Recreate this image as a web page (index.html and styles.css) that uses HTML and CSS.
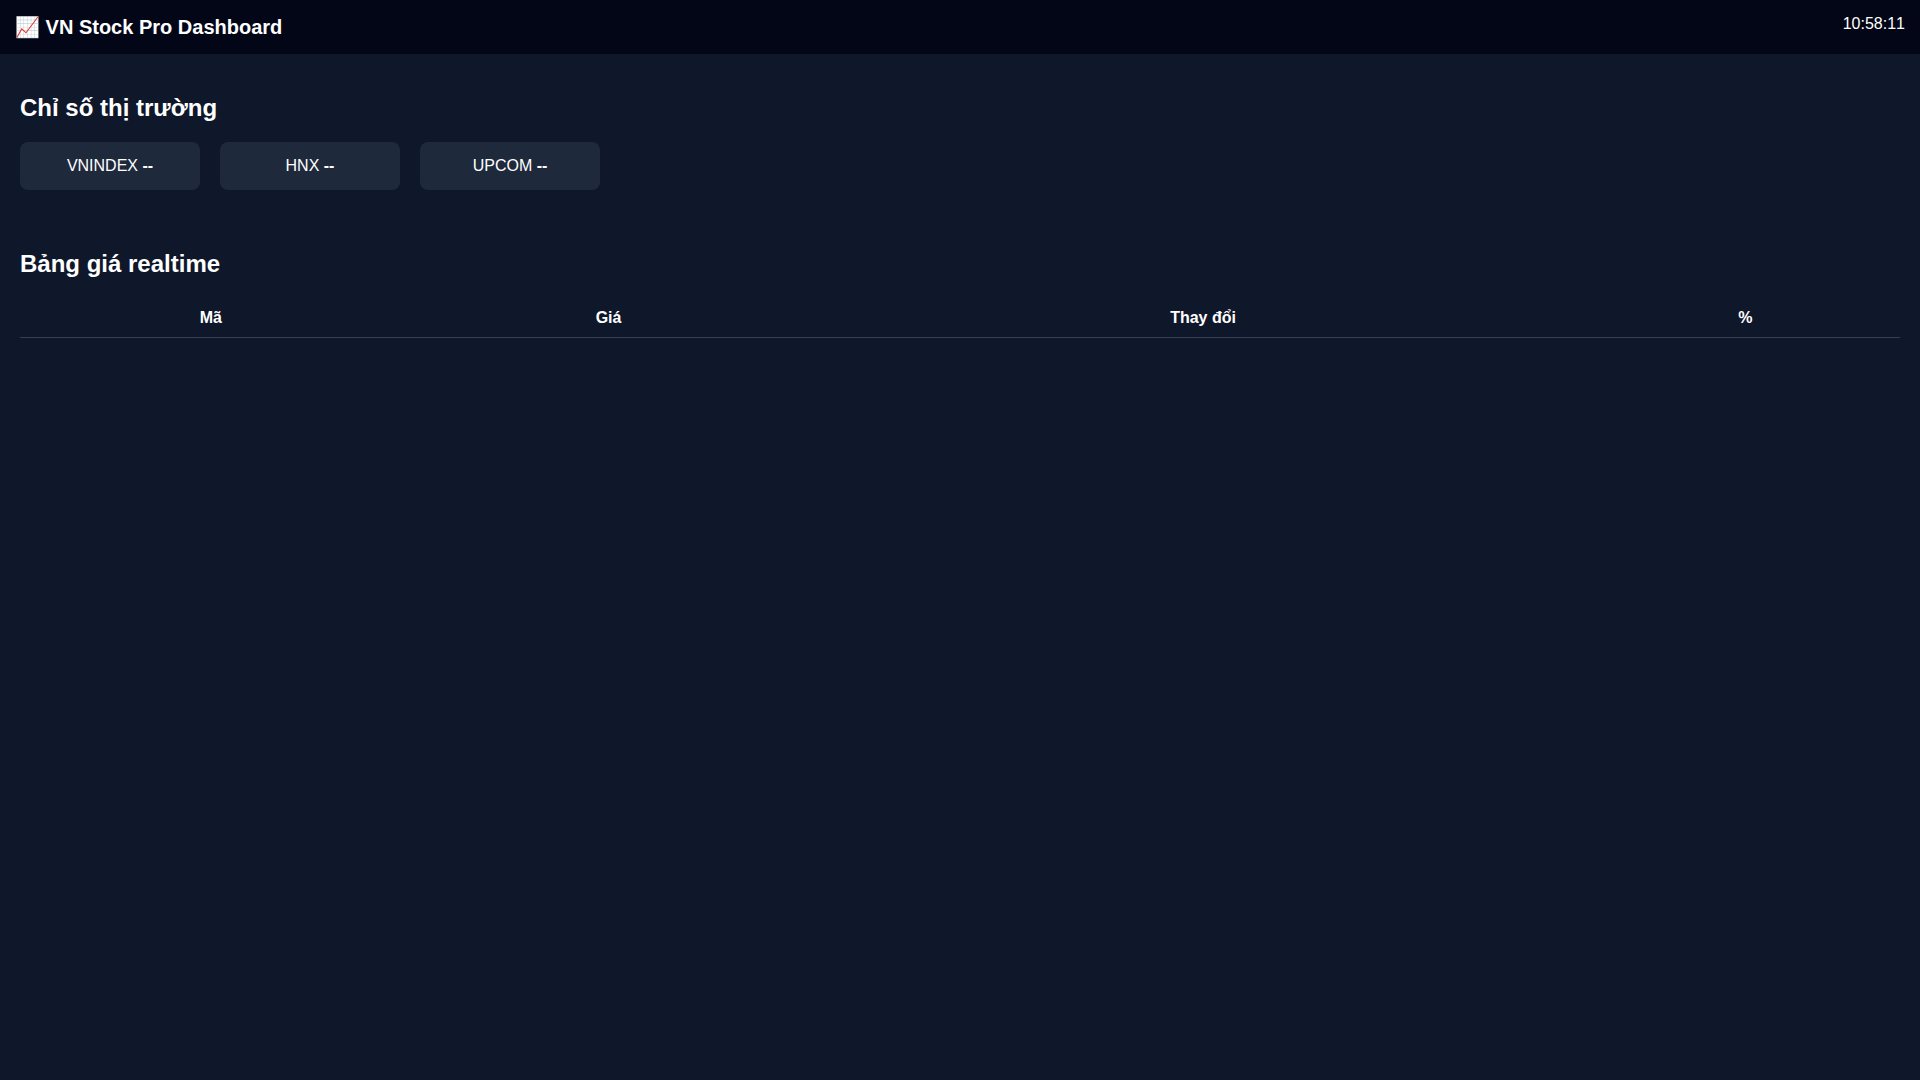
FILE: index.html
```html
<!DOCTYPE html>
<html lang="vi">
<head>
  <meta charset="UTF-8">
  <title>VN Stock Pro Dashboard</title>
  <link rel="stylesheet" href="styles.css">
</head>
<body>
  <header>
    <div class="logo">📈 VN Stock Pro Dashboard</div>
    <div id="clock">10:58:11</div>
  </header>

  <section class="market">
    <h2>Chỉ số thị trường</h2>
    <div class="index-list">
      <div class="card">VNINDEX <b>--</b></div>
      <div class="card">HNX <b>--</b></div>
      <div class="card">UPCOM <b>--</b></div>
    </div>
  </section>

  <section class="prices">
    <h2>Bảng giá realtime</h2>
    <table>
      <thead>
        <tr>
          <th>Mã</th>
          <th>Giá</th>
          <th>Thay đổi</th>
          <th>%</th>
        </tr>
      </thead>
      <tbody id="stock-body"></tbody>
    </table>
  </section>
</body>
</html>
```

FILE: styles.css
```css
body {
  margin: 0;
  background: #0f172a;
  color: white;
  font-family: Arial, "Liberation Sans", sans-serif;
}

header {
  display: flex;
  justify-content: space-between;
  padding: 15px;
  background: #020617;
}

.logo {
  font-size: 20px;
  font-weight: bold;
}

#clock {
  font-kerning: none;
}

section {
  padding: 20px;
}

.index-list {
  display: flex;
  gap: 20px;
}

.card {
  width: 150px;
  padding: 15px;
  background: #1e293b;
  border-radius: 8px;
  text-align: center;
}

table {
  width: 100%;
  border-collapse: collapse;
}

th,
td {
  padding: 10px;
  border-bottom: 1px solid #334155;
  line-height: 19px;
  text-align: center;
}
```
